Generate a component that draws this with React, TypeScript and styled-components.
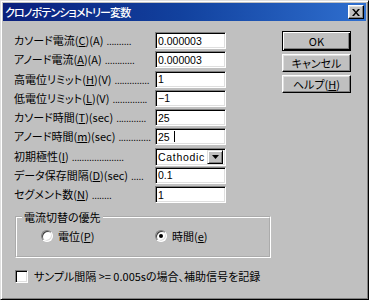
import styled, { createGlobalStyle } from "styled-components";

const GlobalStyle = createGlobalStyle`
  html, body {
    margin: 0;
    padding: 0;
    background: #c0c0c0;
  }
  body {
    font-family: "Noto Sans CJK JP", "Liberation Sans", sans-serif;
    font-size: 11px;
    font-feature-settings: "palt";
    color: #000;
  }
`;

interface FieldRow {
    label: string,
    key: string,
    suffix: string,
    dots: number,
    value?: string,
    caret?: boolean,
    combo?: boolean
}

const rows: FieldRow[] = [
    { label: "カソード電流", key: "C", suffix: "(A)", dots: 10, value: "0.000003" },
    { label: "アノード電流", key: "A", suffix: "(A)", dots: 12, value: "0.000003" },
    { label: "高電位リミット", key: "H", suffix: "(V)", dots: 14, value: "1" },
    { label: "低電位リミット", key: "L", suffix: "(V)", dots: 14, value: "\u22121" },
    { label: "カソード時間", key: "T", suffix: "(sec)", dots: 12, value: "25" },
    { label: "アノード時間", key: "m", suffix: "(sec)", dots: 13, value: "25", caret: true },
    { label: "初期極性", key: "I", suffix: "", dots: 21, combo: true, value: "Cathodic" },
    { label: "データ保存間隔", key: "D", suffix: "(sec)", dots: 5, value: "0.1" },
    { label: "セグメント数", key: "N", suffix: "", dots: 8, value: "1" },
];

const App = () => {
    return (
        <>
            <GlobalStyle />
            <Window>
                <TitleBar>
                    <Title>クロノポテンショメトリー変数</Title>
                    <CloseButton aria-label="close">
                        <svg width="8" height="7" viewBox="0 0 8 7">
                            <path d="M0 0h2l2 2.5L6 0h2L5 3.5 8 7H6L4 4.5 2 7H0l3-3.5z" fill="#000" />
                        </svg>
                    </CloseButton>
                </TitleBar>

                <Body>
                    <TopSection>
                        <Form>
                            {rows.map((row) => (
                                <Row key={row.key}>
                                    <Label>
                                        <span>{row.label}(<Acc>{row.key}</Acc>){row.suffix}</span>
                                        <Dots>{".".repeat(row.dots)}</Dots>
                                    </Label>
                                    {row.combo ? (
                                        <Combo>
                                            <ComboText>{row.value}</ComboText>
                                            <ComboButton>
                                                <svg width="7" height="4" viewBox="0 0 7 4">
                                                    <path d="M0 0h7L3.5 4z" fill="#000" />
                                                </svg>
                                            </ComboButton>
                                        </Combo>
                                    ) : (
                                        <TextBox>
                                            {row.value}
                                            {row.caret && <Caret />}
                                        </TextBox>
                                    )}
                                </Row>
                            ))}
                        </Form>

                        <Buttons>
                            <Button isDefault>OK</Button>
                            <Button>キャンセル</Button>
                            <Button><span>ヘルプ(<Acc>H</Acc>)</span></Button>
                        </Buttons>
                    </TopSection>

                    <Group>
                        <Legend>電流切替の優先</Legend>
                        <RadioRow>
                            <RadioItem>
                                <Radio checked={false} />
                                <span>電位(<Acc>P</Acc>)</span>
                            </RadioItem>
                            <RadioItem>
                                <Radio checked />
                                <span>時間(<Acc>e</Acc>)</span>
                            </RadioItem>
                        </RadioRow>
                    </Group>

                    <CheckRow>
                        <CheckBox />
                        <span>サンプル間隔 &gt;= 0.005sの場合、補助信号を記録</span>
                    </CheckRow>
                </Body>
            </Window>
        </>
    )
}

const Window = styled.div`
    box-sizing: border-box;
    width: 369px;
    height: 300px;
    background: #c0c0c0;
    border: 1px solid;
    border-color: #dfdfdf #000 #000 #dfdfdf;
    box-shadow: inset 1px 1px #fff, inset -1px -1px #808080;
    padding: 2px;
    display: flex;
    flex-direction: column;
`;

const TitleBar = styled.div`
    height: 18px;
    display: flex;
    align-items: center;
    justify-content: space-between;
    padding: 0 2px 0 2px;
    background: linear-gradient(to right, #0a1f7c 0%, #12429f 50%, #2f6fcf 100%);
`;

const Title = styled.span`
    color: #fff;
    font-size: 11px;
    font-weight: 500;
    letter-spacing: -0.9px;
    white-space: nowrap;
`;

const CloseButton = styled.div`
    box-sizing: border-box;
    width: 16px;
    height: 14px;
    display: flex;
    align-items: center;
    justify-content: center;
    background: #c0c0c0;
    border: 1px solid;
    border-color: #fff #000 #000 #fff;
    box-shadow: inset -1px -1px #808080, inset 1px 1px #dfdfdf;
`;

const Body = styled.div`
    display: flex;
    flex-direction: column;
    padding: 11px 0 0 11px;
`;

const TopSection = styled.div`
    display: flex;
    align-items: flex-start;
`;

const Form = styled.div`
    display: flex;
    flex-direction: column;
    gap: 2.25px;
`;

const Row = styled.div`
    display: grid;
    grid-template-columns: 141px 71px;
    align-items: center;
    height: 17px;
`;

const Label = styled.span`
    white-space: nowrap;
    display: flex;
    align-items: center;
    line-height: 17px;
`;

const Acc = styled.span`
    text-decoration: underline;
    text-underline-offset: 1px;
`;

const Dots = styled.span`
    font-family: "Liberation Sans", sans-serif;
    font-size: 10px;
    letter-spacing: -0.3px;
    margin-left: 3px;
    align-self: flex-end;
    line-height: 14px;
`;

const sunken = `
    box-sizing: border-box;
    background: #fff;
    border: 1px solid;
    border-color: #808080 #fff #fff #808080;
    box-shadow: inset 1px 1px #000, inset -1px -1px #dfdfdf;
`;

const TextBox = styled.div`
    ${sunken}
    height: 17px;
    display: flex;
    align-items: center;
    padding-left: 2px;
    font-family: "Liberation Sans", sans-serif;
    font-size: 10.5px;
`;

const Caret = styled.span`
    display: inline-block;
    width: 1px;
    height: 11px;
    background: #000;
    margin-left: 4px;
`;

const Combo = styled.div`
    ${sunken}
    height: 18px;
    display: flex;
    align-items: center;
    padding: 2px;
`;

const ComboText = styled.span`
    flex: 1;
    font-family: "Liberation Sans", sans-serif;
    font-size: 10.5px;
    letter-spacing: 0.7px;
`;

const ComboButton = styled.div`
    box-sizing: border-box;
    width: 16px;
    height: 14px;
    display: flex;
    align-items: center;
    justify-content: center;
    background: #c0c0c0;
    border: 1px solid;
    border-color: #dfdfdf #000 #000 #dfdfdf;
    box-shadow: inset 1px 1px #fff, inset -1px -1px #808080;
`;

const Buttons = styled.div`
    display: flex;
    flex-direction: column;
    gap: 3px;
    margin: -1px 0 0 56px;
`;

const Button = styled.div<{ isDefault?: boolean }>`
    box-sizing: border-box;
    width: 69px;
    height: ${(props) => props.isDefault ? '20px' : '18px'};
    display: flex;
    align-items: center;
    justify-content: center;
    background: #c0c0c0;
    border: 1px solid #000;
    border-color: ${(props) => props.isDefault ? '#000' : '#fff #000 #000 #fff'};
    box-shadow: ${(props) => props.isDefault
        ? 'inset 1px 1px #fff, inset -1px -1px #000, inset -2px -2px #808080'
        : 'inset -1px -1px #808080, inset 1px 1px #dfdfdf'};
    white-space: nowrap;
`;

const Group = styled.fieldset`
    box-sizing: border-box;
    width: 213px;
    height: 48px;
    margin: 7px 0 0 1px;
    padding: 0;
    border: 2px groove #fff;
`;

const Legend = styled.legend`
    padding: 0 2px;
    margin-left: 5px;
    line-height: 14px;
`;

const RadioRow = styled.div`
    display: flex;
    padding: 4px 0 0 24px;
`;

const RadioItem = styled.label`
    display: flex;
    align-items: center;
    gap: 5px;
    width: 114px;
`;

const Radio = styled.span<{ checked?: boolean }>`
    box-sizing: border-box;
    position: relative;
    width: 12px;
    height: 12px;
    border-radius: 50%;
    background: #fff;
    border: 1px solid;
    border-color: #808080 #fff #fff #808080;
    box-shadow: inset 1px 1px #404040, inset -1px -1px #dfdfdf;

    &::after {
        content: "";
        display: ${(props) => props.checked ? 'block' : 'none'};
        position: absolute;
        left: 3px;
        top: 3px;
        width: 4px;
        height: 4px;
        border-radius: 50%;
        background: #000;
    }
`;

const CheckRow = styled.label`
    display: flex;
    align-items: center;
    gap: 6px;
    margin: 10px 0 0 1px;
    white-space: nowrap;
`;

const CheckBox = styled.span`
    ${sunken}
    width: 13px;
    height: 13px;
`;

export default App;
